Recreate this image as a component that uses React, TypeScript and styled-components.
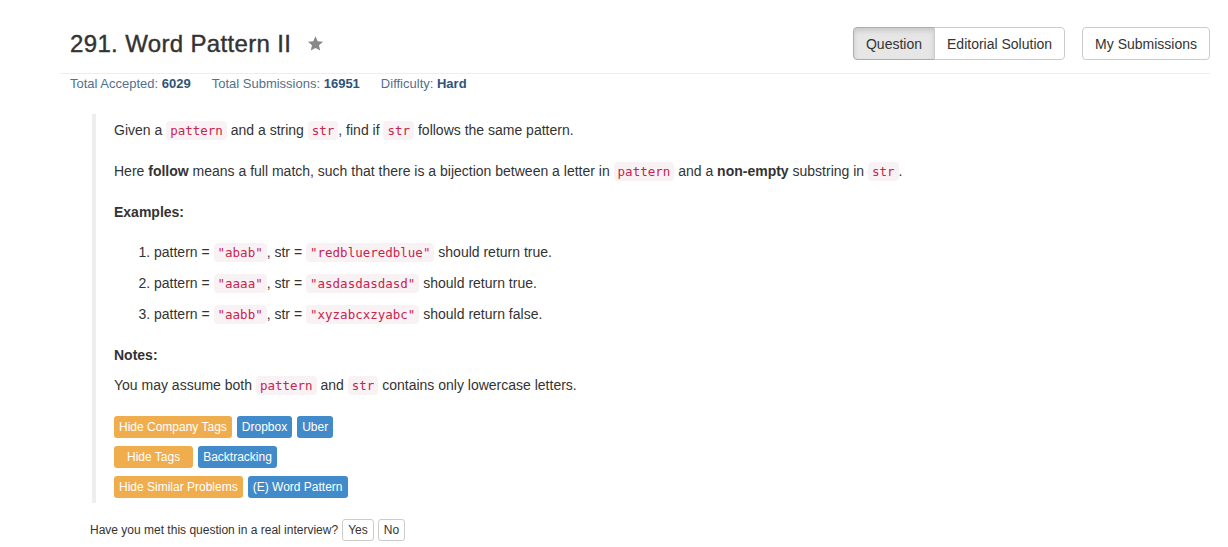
import React from "react";
import styled, { createGlobalStyle } from "styled-components";

const GlobalStyle = createGlobalStyle`
  body {
    margin: 0;
    background: #fff;
    color: #333;
    font-family: "Liberation Sans", Arial, sans-serif;
    font-size: 14px;
    line-height: 20px;
  }
`;

const Page = styled.div`
  width: 1150px;
  margin-left: 60px;
  padding-top: 27px;
`;

const Header = styled.div`
  display: flex;
  align-items: center;
  padding: 0 0 13px 10px;
  border-bottom: 1px solid #eee;
`;

const Title = styled.h3`
  margin: 0;
  font-size: 24px;
  font-weight: 500;
  line-height: 32px;
  color: #333;
  letter-spacing: 0.35px;
  -webkit-text-stroke: 0.4px #333;
`;

const StarIcon = styled.svg`
  margin-left: 16px;
  width: 17px;
  height: 17px;
  fill: #888;
`;

const Spacer = styled.div`
  flex: 1;
`;

const BtnGroup = styled.div`
  display: flex;
`;

const NavButton = styled.button<{ $active?: boolean; $pos?: "left" | "right" | "single" }>`
  height: 33px;
  padding: 0 12px;
  font-family: inherit;
  font-size: 14px;
  color: #333;
  background: ${(p) => (p.$active ? "#e6e6e6" : "#fff")};
  border: 1px solid ${(p) => (p.$active ? "#adadad" : "#ccc")};
  box-shadow: ${(p) => (p.$active ? "inset 0 3px 5px rgba(0,0,0,.125)" : "none")};
  border-radius: ${(p) =>
    p.$pos === "left" ? "4px 0 0 4px" : p.$pos === "right" ? "0 4px 4px 0" : "4px"};
  margin-left: ${(p) => (p.$pos === "right" ? "-1px" : "0")};
  cursor: pointer;
`;

const SingleWrap = styled.div`
  margin-left: 17px;
`;

const Stats = styled.div`
  display: flex;
  gap: 21px;
  margin-top: 1px;
  padding-left: 10px;
  font-size: 13px;
  line-height: 18px;
  color: #52708e;
`;

const StatNum = styled.b`
  color: #2f5479;
`;

const Quote = styled.div`
  margin: 21px 0 0 32px;
  padding: 6px 0 5px 18px;
  border-left: 4px solid #eee;
`;

const Para = styled.p<{ $gap?: number }>`
  margin: 0 0 ${(p) => p.$gap ?? 21}px;
`;

const Code = styled.code`
  font-family: "DejaVu Sans Mono", Menlo, monospace;
  font-size: 12.5px;
  line-height: 1;
  padding: 2px 4px;
  color: #c7254e;
  background: #f9f2f4;
  border-radius: 4px;
`;

const List = styled.ol`
  margin: 0 0 21px;
  padding-left: 40px;
`;

const Item = styled.li`
  margin-bottom: 11px;
  &:last-child {
    margin-bottom: 0;
  }
`;

const TagRows = styled.div`
  display: flex;
  flex-direction: column;
  gap: 8px;
`;

const TagRow = styled.div`
  display: flex;
  gap: 5px;
`;

const Tag = styled.span<{ $kind: "warn" | "info"; $pad?: number }>`
  display: inline-block;
  height: 22px;
  line-height: 22px;
  padding: 0 ${(p) => p.$pad ?? 5}px;
  font-size: 12px;
  color: #fff;
  border-radius: 3px;
  background: ${(p) => (p.$kind === "warn" ? "#f0ad4e" : "#428bca")};
`;

const Interview = styled.div`
  display: flex;
  align-items: center;
  margin: 16px 0 0 30px;
  font-size: 12px;
  color: #333;
`;

const SmallBtn = styled.button`
  height: 22px;
  margin-left: 4px;
  padding: 0 5px;
  font-family: inherit;
  font-size: 12px;
  color: #333;
  background: #fff;
  border: 1px solid #ccc;
  border-radius: 3px;
`;

export default function App() {
  return (
    <>
      <GlobalStyle />
      <Page>
        <Header>
          <Title>291. Word Pattern II</Title>
          <StarIcon viewBox="0 0 24 24">
            <path d="M12 1.8l3.1 6.9 7.5.8-5.6 5.1 1.6 7.4L12 18.2l-6.6 3.8 1.6-7.4-5.6-5.1 7.5-.8z" />
          </StarIcon>
          <Spacer />
          <BtnGroup>
            <NavButton $active $pos="left">Question</NavButton>
            <NavButton $pos="right">Editorial Solution</NavButton>
          </BtnGroup>
          <SingleWrap>
            <NavButton $pos="single">My Submissions</NavButton>
          </SingleWrap>
        </Header>

        <Stats>
          <span>
            Total Accepted: <StatNum>6029</StatNum>
          </span>
          <span>
            Total Submissions: <StatNum>16951</StatNum>
          </span>
          <span>
            Difficulty: <StatNum>Hard</StatNum>
          </span>
        </Stats>

        <Quote>
          <Para>
            Given a <Code>pattern</Code> and a string <Code>str</Code>, find if <Code>str</Code>{" "}
            follows the same pattern.
          </Para>
          <Para>
            Here <b>follow</b> means a full match, such that there is a bijection between a letter
            in <Code>pattern</Code> and a <b>non-empty</b> substring in <Code>str</Code>.
          </Para>
          <Para $gap={20}>
            <b>Examples:</b>
          </Para>
          <List>
            <Item>
              pattern = <Code>"abab"</Code>, str = <Code>"redblueredblue"</Code> should return true.
            </Item>
            <Item>
              pattern = <Code>"aaaa"</Code>, str = <Code>"asdasdasdasd"</Code> should return true.
            </Item>
            <Item>
              pattern = <Code>"aabb"</Code>, str = <Code>"xyzabcxzyabc"</Code> should return false.
            </Item>
          </List>
          <Para $gap={10}>
            <b>Notes:</b>
          </Para>
          <Para>
            You may assume both <Code>pattern</Code> and <Code>str</Code> contains only lowercase
            letters.
          </Para>
          <TagRows>
            <TagRow>
              <Tag $kind="warn">Hide Company Tags</Tag>
              <Tag $kind="info">Dropbox</Tag>
              <Tag $kind="info">Uber</Tag>
            </TagRow>
            <TagRow>
              <Tag $kind="warn" $pad={13}>
                Hide Tags
              </Tag>
              <Tag $kind="info">Backtracking</Tag>
            </TagRow>
            <TagRow>
              <Tag $kind="warn">Hide Similar Problems</Tag>
              <Tag $kind="info">(E) Word Pattern</Tag>
            </TagRow>
          </TagRows>
        </Quote>

        <Interview>
          Have you met this question in a real interview?
          <SmallBtn>Yes</SmallBtn>
          <SmallBtn>No</SmallBtn>
        </Interview>
      </Page>
    </>
  );
}
